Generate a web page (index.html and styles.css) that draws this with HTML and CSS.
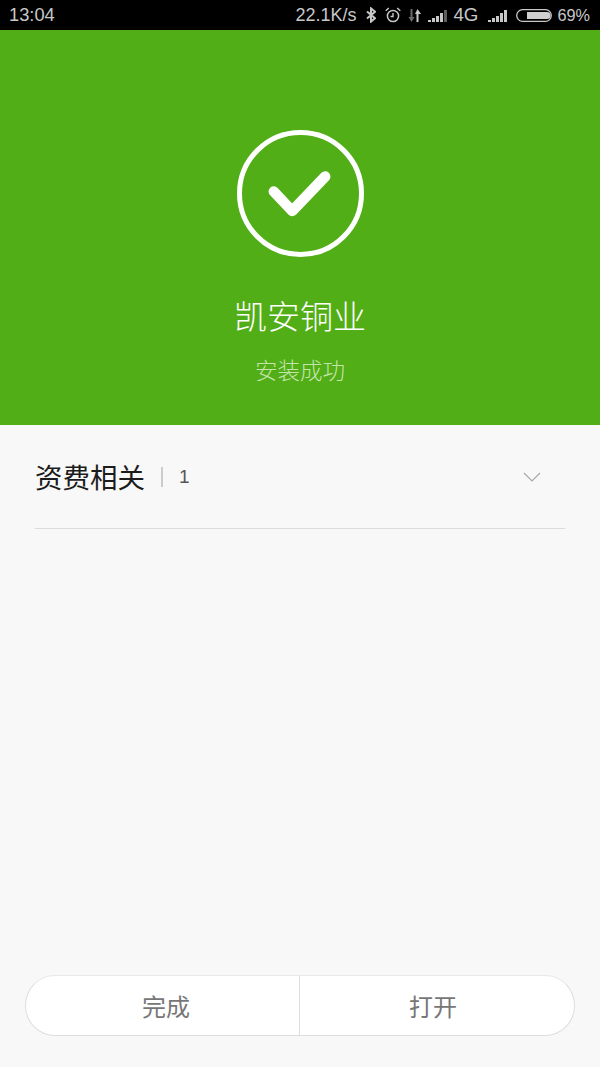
FILE: index.html
```html
<!DOCTYPE html>
<html lang="zh-CN">

<head>
	<meta charset="UTF-8">
	<meta name="viewport" content="width=device-width, initial-scale=1.0">
	<title>安装成功</title>
	<link rel="stylesheet" href="styles.css">
</head>

<body>
	<div class="status-bar">
		<span class="clock">13:04</span>
		<div class="status-right">
			<span class="speed">22.1K/s</span>
			<svg class="ico-bt" width="10" height="16" viewBox="0 0 10 16"><path d="M1 4.500l8 6.800-4 3.300V1.400l4 3.300-8 6.800" fill="none" stroke="#c8c8c8" stroke-width="2"/></svg>
			<svg class="ico-alarm" width="16" height="16" viewBox="0 0 16 16">
				<circle cx="8" cy="9" r="5.600" fill="none" stroke="#c8c8c8" stroke-width="1.500"/>
				<path d="M8 6v3.500H5.500M0.700 3.800L3.800 1M15.300 3.800L12.200 1" fill="none" stroke="#c8c8c8" stroke-width="1.400"/>
			</svg>
			<svg class="ico-data" width="14" height="15" viewBox="0 0 14 15">
				<path d="M3.500 1v10" stroke="#6a6a6a" stroke-width="2"/>
				<path d="M0.500 9l3 5 3-5z" fill="#6a6a6a"/>
				<path d="M9.500 14V4" stroke="#c8c8c8" stroke-width="2"/>
				<path d="M7 6l2.500-5L13 6z" fill="#c8c8c8"/>
			</svg>
			<svg class="ico-signal" width="20" height="12" viewBox="0 0 20 12">
				<path d="M0 10h3v2H0zM4 8h3v4H4zM8 6h3v6H8zM12 3h3v9h-3z" fill="#c8c8c8"/>
				<path d="M16 0h3v12h-3z" fill="#5e5e5e"/>
			</svg>
			<span class="net">4G</span>
			<svg class="ico-signal-2" width="20" height="12" viewBox="0 0 20 12">
				<path d="M0 10h3v2H0zM4 8h3v4H4zM8 6h3v6H8zM12 3h3v9h-3zM16 0h3v12h-3z" fill="#c8c8c8"/>
			</svg>
			<svg class="ico-batt" width="36" height="13" viewBox="0 0 36 13">
				<rect x="0.700" y="0.700" width="34.600" height="11.600" rx="5.800" fill="none" stroke="#c8c8c8" stroke-width="1.300"/>
				<path d="M11 3h20a3.500 3.500 0 0 1 0 7H11z" fill="#d0d0d0"/>
			</svg>
			<span class="batt">69%</span>
		</div>
	</div>

	<div class="hero">
		<div class="ok-ring">
			<svg width="64" height="48" viewBox="0 0 64 48"><path d="M5.800 21.500L24.200 41 57.200 6.500" fill="none" stroke="#fff" stroke-width="10.500" stroke-linecap="round" stroke-linejoin="round"/></svg>
		</div>
		<h1 class="app-name">凯安铜业</h1>
		<p class="app-state">安装成功</p>
	</div>

	<div class="content">
		<div class="tag-row">
			<span class="tag-name">资费相关</span>
			<span class="tag-count">1</span>
			<svg class="chevron" width="18" height="10" viewBox="0 0 18 10"><path d="M1 1l8 8 8-8" fill="none" stroke="#a8a8a8" stroke-width="1.200"/></svg>
		</div>
	</div>

	<div class="actions">
		<button class="btn btn-done">完成</button>
		<button class="btn btn-open">打开</button>
	</div>
</body>

</html>
```

FILE: styles.css
```css
html,
body {
	margin: 0;
	padding: 0;
	height: 100%;
}

body {
	display: flex;
	flex-direction: column;
	height: 1067px;
	background-color: #f8f8f8;
	font-family: "Roboto", "Liberation Sans", "Noto Sans CJK SC", sans-serif;
	overflow: hidden;
}

.status-bar {
	display: flex;
	justify-content: space-between;
	align-items: center;
	flex: none;
	box-sizing: border-box;
	height: 30px;
	padding: 0 10px 0 9px;
	background-color: #000;
	color: #c8c8c8;
	font-family: "Liberation Sans", sans-serif;
	font-size: 18.300px;
}

.status-right {
	display: flex;
	align-items: center;
}

.speed {
	font-size: 18px;
}

.ico-bt {
	margin-left: 10px;
}

.ico-alarm {
	margin-left: 9px;
}

.ico-data {
	margin-left: 7px;
}

.ico-signal {
	margin-left: 6px;
	margin-top: 2px;
}

.net {
	margin-left: 5px;
	font-size: 18.700px;
}

.ico-signal-2 {
	margin-left: 10px;
	margin-top: 2px;
}

.ico-batt {
	margin-left: 8px;
}

.batt {
	margin-left: 5px;
	font-size: 16.300px;
}

.hero {
	display: flex;
	flex-direction: column;
	align-items: center;
	flex: none;
	box-sizing: border-box;
	height: 395px;
	padding-top: 100px;
	background-color: #52ae16;
}

.ok-ring {
	display: flex;
	align-items: center;
	justify-content: center;
	box-sizing: border-box;
	width: 127px;
	height: 127px;
	border: 5px solid #fff;
	border-radius: 50%;
}

.app-name {
	margin: 36px 0 0 0;
	font-size: 33px;
	line-height: 44px;
	font-weight: 300;
	color: #fff;
	font-family: "Noto Sans CJK SC", sans-serif;
}

.app-state {
	margin: 17px 0 0 0;
	font-size: 22.500px;
	line-height: 30px;
	font-weight: 300;
	color: #c4e4ae;
	font-family: "Noto Sans CJK SC", sans-serif;
}

.content {
	flex: 1;
	padding: 0 35px;
}

.tag-row {
	display: flex;
	align-items: center;
	height: 103px;
	border-bottom: 1px solid #dcdcdc;
}

.tag-name {
	margin-bottom: 2px;
	font-size: 27.500px;
	color: #1c1c1c;
	font-family: "Noto Sans CJK SC", sans-serif;
}

.tag-count {
	margin-left: 16px;
	padding-left: 16px;
	height: 20px;
	line-height: 20px;
	font-size: 19px;
	color: #555;
	border-left: 2px solid #ccc;
	font-family: "Liberation Sans", sans-serif;
}

.chevron {
	margin-left: auto;
	margin-right: 24px;
}

.actions {
	display: flex;
	flex: none;
	box-sizing: border-box;
	height: 61px;
	margin: 0 25px 31px 25px;
	background-color: #fff;
	border: 1px solid #dedede;
	border-top-color: #e9e9e9;
	border-radius: 30px;
	overflow: hidden;
}

.btn {
	flex: 1 1 0;
	box-sizing: border-box;
	padding: 0;
	border: 0;
	background: none;
	font-size: 24px;
	color: #777;
	font-family: "Noto Sans CJK SC", sans-serif;
}

.btn-done {
	padding-left: 7px;
}

.btn-open {
	padding-right: 8px;
	border-left: 1px solid #dedede;
}
```
